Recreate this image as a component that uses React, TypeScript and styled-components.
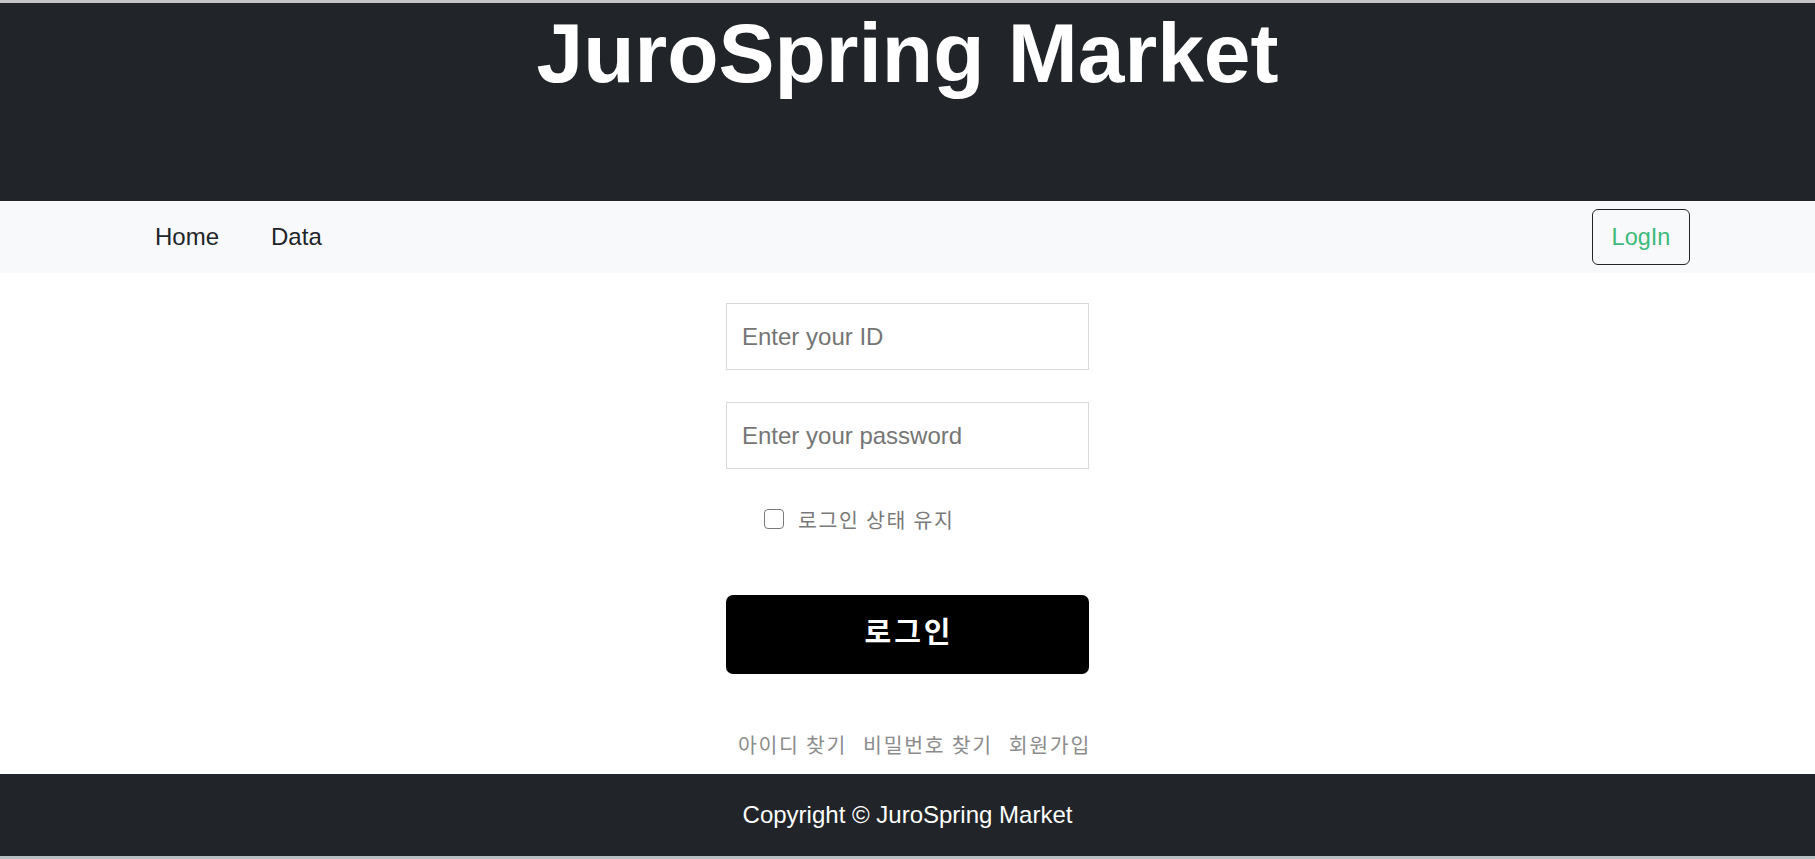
import React from "react";
import styled, { createGlobalStyle } from "styled-components";

const GlobalStyle = createGlobalStyle`
  html, body {
    margin: 0;
    padding: 0;
    background: #ffffff;
  }
  body {
    font-family: "Liberation Sans", Arial, sans-serif;
    color: #212529;
  }
  * { box-sizing: border-box; }
`;

const Page = styled.div`
  display: flex;
  flex-direction: column;
  min-height: 859px;
`;

const Edge = styled.div<{ $tone: string }>`
  height: 3px;
  background: ${(p) => p.$tone};
`;

const Header = styled.header`
  height: 198px;
  background: #212529;
  display: flex;
  justify-content: center;
  align-items: flex-start;
  padding-top: 8px;
`;

const Title = styled.h1`
  margin: 0;
  font-family: "Liberation Sans", Arial, sans-serif;
  font-weight: 700;
  font-size: 84px;
  line-height: 1;
  color: #ffffff;
`;

const NavBar = styled.nav`
  height: 72px;
  background: #f8f9fa;
  display: flex;
  align-items: center;
  padding: 0 125px 0 155px;
`;

const NavLinks = styled.div`
  display: flex;
  align-items: center;
  gap: 52px;
  flex: 1;
`;

const NavLink = styled.a`
  font-size: 24px;
  color: #212529;
  text-decoration: none;
  cursor: pointer;
`;

const LoginOutline = styled.button`
  width: 98px;
  height: 56px;
  border: 1px solid #212529;
  border-radius: 6px;
  background: transparent;
  color: #3dba7c;
  font-family: "Liberation Sans", Arial, sans-serif;
  font-size: 23.5px;
  padding: 0;
  cursor: pointer;
`;

const Main = styled.main`
  flex: 1;
  display: flex;
  justify-content: center;
  padding: 30px 0 15px;
`;

const Form = styled.form`
  width: 363px;
  display: flex;
  flex-direction: column;
`;

const Field = styled.input`
  height: 67px;
  width: 100%;
  border: 1px solid #d9d9d9;
  border-radius: 0;
  padding: 0 15px;
  font-family: "Liberation Sans", Arial, sans-serif;
  font-size: 24px;
  color: #212529;
  outline: none;
  & + & {
    margin-top: 32px;
  }
  &::placeholder {
    color: #757575;
  }
`;

const KeepRow = styled.label`
  display: flex;
  align-items: center;
  gap: 14px;
  margin: 35px 0 0 38px;
  height: 30px;
  cursor: pointer;
`;

const Check = styled.input`
  appearance: none;
  -webkit-appearance: none;
  margin: 0;
  width: 20px;
  height: 20px;
  border: 1.5px solid #7a7a7a;
  border-radius: 4px;
  background: #fff;
`;

const KoText = styled.span<{ $color?: string }>`
  flex-shrink: 0;
  white-space: nowrap;
  font-family: "Noto Sans CJK KR", "Noto Sans", sans-serif;
  font-size: 20.5px;
  letter-spacing: 1.7px;
  color: ${(p) => p.$color ?? "#7a7a7a"};
`;

const SubmitButton = styled.button`
  margin-top: 61px;
  height: 79px;
  width: 100%;
  border: none;
  border-radius: 7px;
  background: #000000;
  color: #ffffff;
  font-family: "Noto Sans CJK KR", "Noto Sans", sans-serif;
  font-weight: 700;
  font-size: 29px;
  letter-spacing: 3px;
  padding: 0 0 9px 3px;
  cursor: pointer;
`;

const LinkRow = styled.div`
  display: flex;
  gap: 16px;
  margin: 55px -20px 0 12px;
  white-space: nowrap;
`;

const Footer = styled.footer`
  height: 82px;
  background: #212529;
  display: flex;
  align-items: center;
  justify-content: center;
`;

const FooterText = styled.p`
  margin: 0;
  font-size: 24px;
  color: #ffffff;
`;

export default function App() {
  return (
    <>
      <GlobalStyle />
      <Page>
        <Edge $tone="#c6c6c6" />
        <Header>
          <Title>JuroSpring Market</Title>
        </Header>
        <NavBar>
          <NavLinks>
            <NavLink>Home</NavLink>
            <NavLink>Data</NavLink>
          </NavLinks>
          <LoginOutline type="button">LogIn</LoginOutline>
        </NavBar>
        <Main>
          <Form onSubmit={(e) => e.preventDefault()}>
            <Field type="text" placeholder="Enter your ID" />
            <Field type="password" placeholder="Enter your password" />
            <KeepRow>
              <Check type="checkbox" />
              <KoText>로그인 상태 유지</KoText>
            </KeepRow>
            <SubmitButton type="submit">로그인</SubmitButton>
            <LinkRow>
              <KoText $color="#8c8c8c">아이디 찾기</KoText>
              <KoText $color="#8c8c8c">비밀번호 찾기</KoText>
              <KoText $color="#8c8c8c">회원가입</KoText>
            </LinkRow>
          </Form>
        </Main>
        <Footer>
          <FooterText>Copyright © JuroSpring Market</FooterText>
        </Footer>
        <Edge $tone="#b8bfc2" />
      </Page>
    </>
  );
}
